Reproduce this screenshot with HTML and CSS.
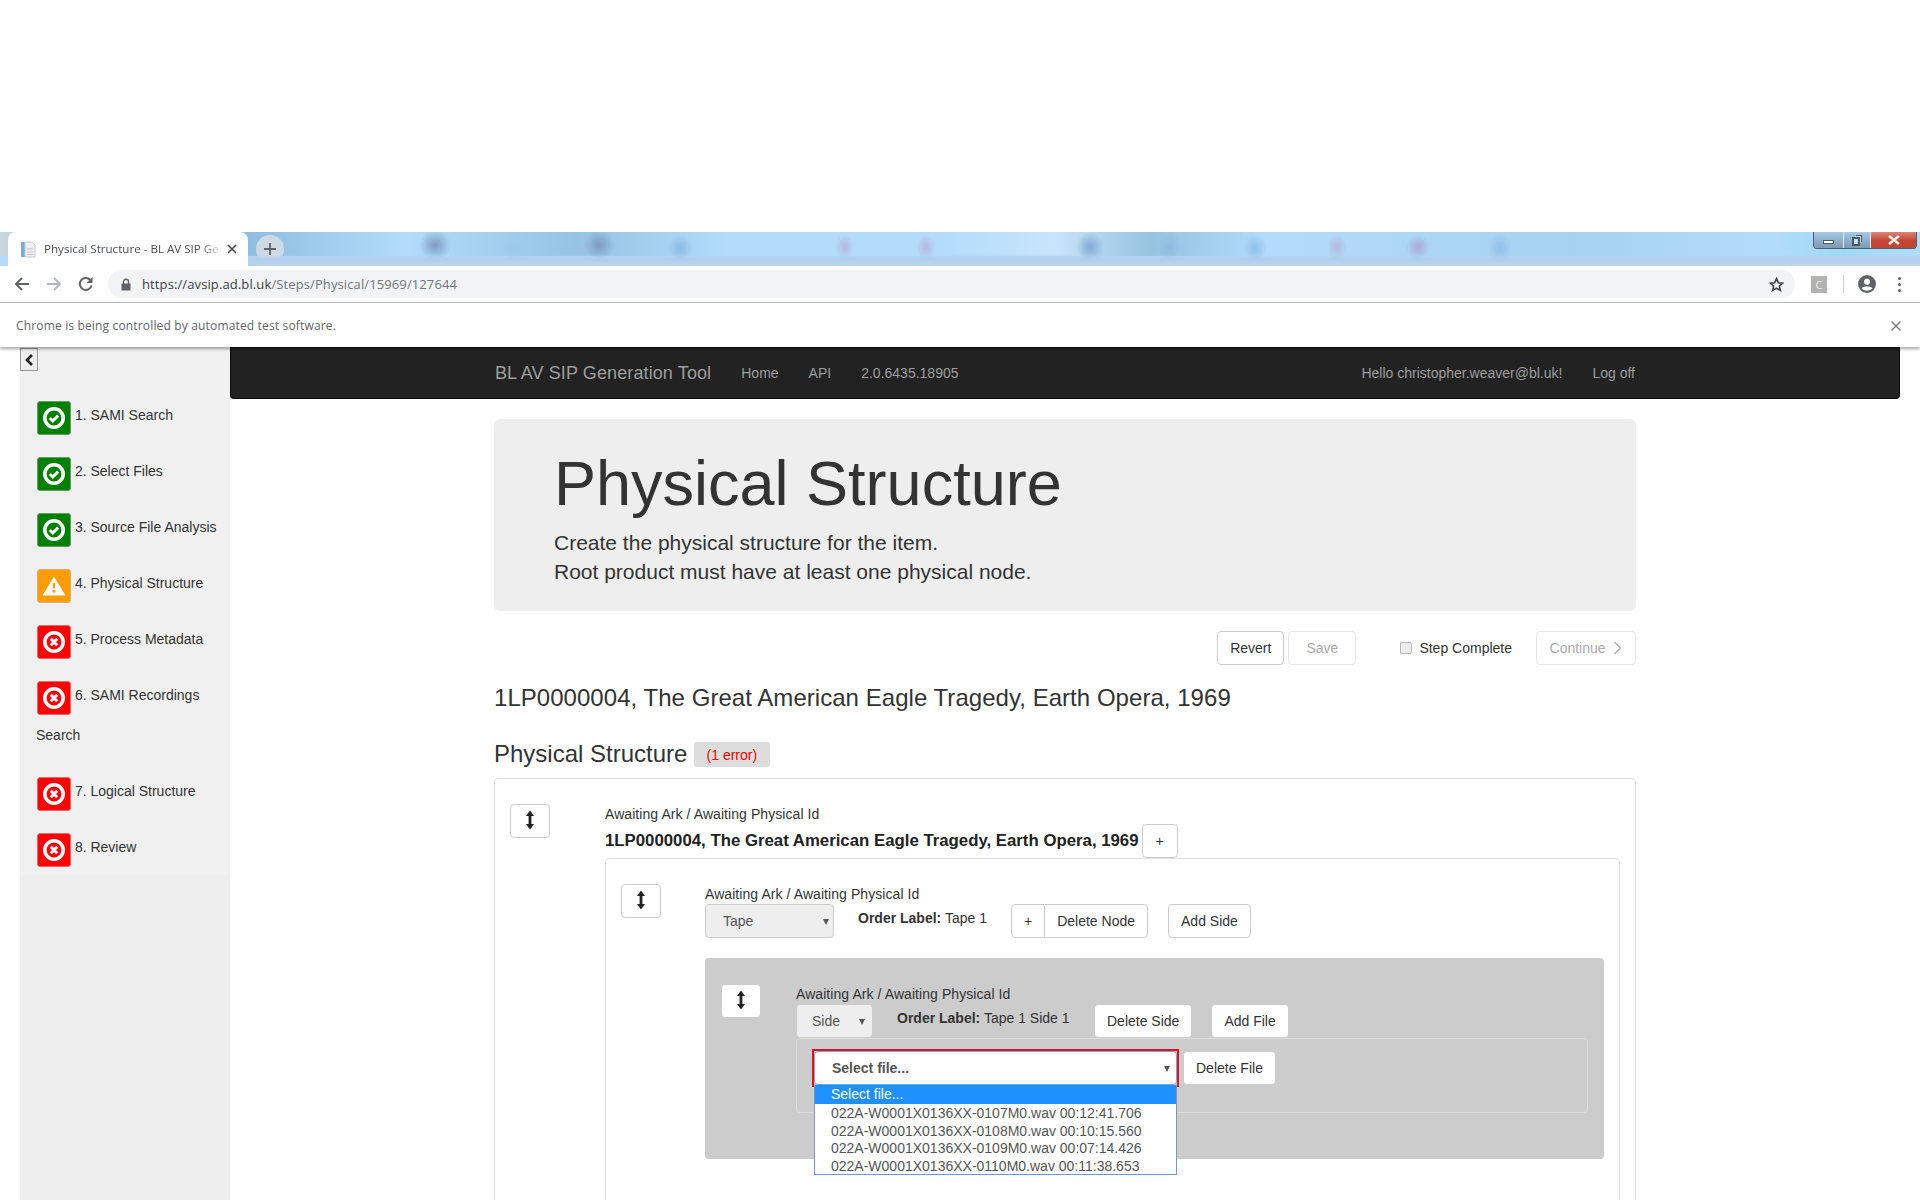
FILE: index.html
```html
<!DOCTYPE html>
<html>
<head>
  <title>Physical Structure - BL AV SIP Generation Tool</title>
  <link rel="stylesheet" href="styles.css">
</head>
<body>
  <svg class="defs" width="0" height="0">
    <symbol id="ok" viewBox="0 0 24 24">
      <circle cx="12" cy="12" r="9.2" fill="none" stroke="#fff" stroke-width="3.6"/>
      <path d="M7.8 12l3 3 5.400-5.400" fill="none" stroke="#fff" stroke-width="3"/>
    </symbol>
    <symbol id="bad" viewBox="0 0 24 24">
      <circle cx="12" cy="12" r="9.2" fill="none" stroke="#fff" stroke-width="3.6"/>
      <path d="M8.8 8.800l6.400 6.400M15.200 8.800l-6.400 6.400" fill="none" stroke="#fff" stroke-width="3"/>
    </symbol>
    <symbol id="warn" viewBox="0 0 24 24">
      <path d="M12 2.500L23.500 21.500H.5zM9 21h6" fill="#fff"/>
      <path d="M10.700 9h2.600l-.4 5.500h-1.800zM10.700 16h2.600v2.500h-2.600z" fill="#ff9c00"/>
    </symbol>
    <symbol id="resize" viewBox="0 0 12 20">
      <path d="M6 .5L10 6H7.400v8H10l-4 5.500L2 14h2.600V6H2z" fill="#222"/>
    </symbol>
  </svg>

  <div class="browser">
    <div class="tabstrip">
      <div class="tab">
        <svg class="favicon" width="16" height="17" viewBox="0 0 16 17">
          <path d="M1 1h4v15H1z" fill="#7ea9d6"/>
          <path d="M5 1h7l3 3v12H5z" fill="#eef0f3" stroke="#c9ccd1"/>
          <path d="M7 8h6M7 11h6M7 13.500h6" stroke="#c3c7cc"/>
        </svg>
        <span class="tab-title">Physical Structure - BL AV SIP Ge</span>
        <svg class="tab-close" width="10" height="10" viewBox="0 0 10 10">
          <path d="M1 1l8 8M9 1L1 9" stroke="#444" stroke-width="1.500"/>
        </svg>
      </div>
      <div class="newtab">
        <svg width="14" height="14" viewBox="0 0 14 14"><path d="M7 1v12M1 7h12" stroke="#5f6368" stroke-width="1.800"/></svg>
      </div>
      <div class="winbtns">
        <div class="winbtn min"><i></i></div>
        <div class="winbtn max"><i></i></div>
        <div class="winbtn close">
          <svg width="14" height="10" viewBox="0 0 14 10"><path d="M2 1l10 8M12 1L2 9" stroke="#eee" stroke-width="2.600"/></svg>
        </div>
      </div>
    </div>
    <div class="toolbar">
      <svg class="nav-icon" width="16" height="16" viewBox="0 0 16 16"><path d="M15 8H2M8 2L2 8l6 6" fill="none" stroke="#5f6368" stroke-width="2"/></svg>
      <svg class="nav-icon" width="16" height="16" viewBox="0 0 16 16"><path d="M1 8h13M8 2l6 6-6 6" fill="none" stroke="#b4b6b9" stroke-width="2"/></svg>
      <svg class="nav-icon" width="16" height="16" viewBox="0 0 16 16"><path d="M13.600 9.500A6 6 0 1 1 12.200 3.800" fill="none" stroke="#5f6368" stroke-width="2"/><path d="M14.500 1v6h-6z" fill="#5f6368"/></svg>
      <div class="omnibox">
        <svg width="10" height="13" viewBox="0 0 10 13"><path d="M2.500 6V3.800a2.500 2.500 0 0 1 5 0V6" fill="none" stroke="#5f6368" stroke-width="1.400"/><path d="M.5 5.500h9v7h-9z" fill="#5f6368"/></svg>
        <span class="url"><b>https://avsip.ad.bl.uk</b>/Steps/Physical/15969/127644</span>
        <svg class="star" width="15" height="15" viewBox="0 0 24 24"><path d="M12 2.500l2.900 6.600 7.100.7-5.400 4.700 1.600 7-6.200-3.700-6.200 3.700 1.600-7L2 9.800l7.100-.7z" fill="none" stroke="#444" stroke-width="2.600"/></svg>
      </div>
      <div class="ext">C</div>
      <div class="tool-sep"></div>
      <svg class="profile" width="18" height="18" viewBox="0 0 18 18"><circle cx="9" cy="9" r="9" fill="#5f6368"/><circle cx="9" cy="6.700" r="3" fill="#fff"/><path d="M3.500 13.200c1.500-2.400 9.500-2.400 11 0a7 7 0 0 1-11 0z" fill="#fff"/></svg>
      <div class="dots"><i></i><i></i><i></i></div>
    </div>
    <div class="infobar">
      <span>Chrome is being controlled by automated test software.</span>
      <svg width="10" height="10" viewBox="0 0 10 10"><path d="M0.500 0.500l9 9M9.500 0.500l-9 9" stroke="#777" stroke-width="1.400"/></svg>
    </div>
  </div>

  <div class="page">
    <aside class="sidebar">
      <button class="collapse">
        <svg width="9" height="12" viewBox="0 0 9 12"><path d="M7 1L2 6l5 5" fill="none" stroke="#222" stroke-width="2.600"/></svg>
      </button>
      <ul class="steps">
        <li><span class="step-icon done"><svg><use href="#ok"/></svg></span> 1. SAMI Search</li>
        <li><span class="step-icon done"><svg><use href="#ok"/></svg></span> 2. Select Files</li>
        <li><span class="step-icon done"><svg><use href="#ok"/></svg></span> 3. Source File Analysis</li>
        <li><span class="step-icon warning"><svg><use href="#warn"/></svg></span> 4. Physical Structure</li>
        <li><span class="step-icon error"><svg><use href="#bad"/></svg></span> 5. Process Metadata</li>
        <li><span class="step-icon error"><svg><use href="#bad"/></svg></span> 6. SAMI Recordings Search</li>
        <li><span class="step-icon error"><svg><use href="#bad"/></svg></span> 7. Logical Structure</li>
        <li><span class="step-icon error"><svg><use href="#bad"/></svg></span> 8. Review</li>
      </ul>
    </aside>

    <main class="main">
      <nav class="navbar">
        <a class="brand">BL AV SIP Generation Tool</a>
        <a>Home</a>
        <a>API</a>
        <a>2.0.6435.18905</a>
        <a class="push">Hello christopher.weaver@bl.uk!</a>
        <a>Log off</a>
      </nav>

      <div class="container">
        <div class="jumbotron">
          <h1>Physical Structure</h1>
          <p>Create the physical structure for the item.<br>Root product must have at least one physical node.</p>
        </div>

        <div class="actions">
          <button class="btn">Revert</button>
          <button class="btn disabled save">Save</button>
          <label class="complete"><span class="checkbox"></span>Step Complete</label>
          <button class="btn disabled continue">Continue
            <svg width="9" height="14" viewBox="0 0 9 14"><path d="M1.500 1l6 6-6 6" fill="none" stroke="#aaa" stroke-width="1.400"/></svg>
          </button>
        </div>

        <h3 class="item-title">1LP0000004, The Great American Eagle Tragedy, Earth Opera, 1969</h3>
        <h3 class="section-title">Physical Structure <span class="badge">(1 error)</span></h3>

        <div class="node root">
          <div class="handle-col"><button class="btn handle"><svg><use href="#resize"/></svg></button></div>
          <div class="node-body">
            <div class="ids">Awaiting Ark / Awaiting Physical Id</div>
            <div class="root-row">
              <strong>1LP0000004, The Great American Eagle Tragedy, Earth Opera, 1969</strong>
              <button class="btn">+</button>
            </div>

            <div class="node tape">
              <div class="handle-col"><button class="btn handle"><svg><use href="#resize"/></svg></button></div>
              <div class="node-body">
                <div class="ids">Awaiting Ark / Awaiting Physical Id</div>
                <div class="row">
                  <div class="select locked tape-select">Tape</div>
                  <div class="order"><b>Order Label:</b> Tape 1</div>
                  <div class="btn-group"><button class="btn">+</button><button class="btn">Delete Node</button></div>
                  <button class="btn add-side">Add Side</button>
                </div>

                <div class="node side">
                  <div class="handle-col"><button class="btn handle"><svg><use href="#resize"/></svg></button></div>
                  <div class="node-body">
                    <div class="ids">Awaiting Ark / Awaiting Physical Id</div>
                    <div class="row">
                      <div class="select locked side-select">Side</div>
                      <div class="order"><b>Order Label:</b> Tape 1 Side 1</div>
                      <button class="btn delete-side">Delete Side</button>
                      <button class="btn add-file">Add File</button>
                    </div>
                    <div class="file-panel">
                      <div class="file-select-wrap">
                        <div class="select file-select">Select file...</div>
                        <ul class="dropdown">
                          <li class="active">Select file...</li>
                          <li>022A-W0001X0136XX-0107M0.wav 00:12:41.706</li>
                          <li>022A-W0001X0136XX-0108M0.wav 00:10:15.560</li>
                          <li>022A-W0001X0136XX-0109M0.wav 00:07:14.426</li>
                          <li>022A-W0001X0136XX-0110M0.wav 00:11:38.653</li>
                        </ul>
                      </div>
                      <button class="btn">Delete File</button>
                    </div>
                  </div>
                </div>
              </div>
            </div>
          </div>
        </div>
      </div>
    </main>
  </div>
</body>
</html>
```

FILE: styles.css
```css
* { box-sizing: border-box; }
html, body { margin: 0; height: 1200px; overflow: hidden; }
body { padding-top: 232px; background: #fff; font-family: "Liberation Sans", Arial, sans-serif; font-size: 14px; line-height: 20px; color: #333; }
.defs { position: absolute; }
ul { list-style: none; margin: 0; padding: 0; }

/* browser chrome */
.browser { font-family: "Open Sans", "Noto Sans", sans-serif; height: 115px; position: relative; z-index: 2; }
.tabstrip {
  height: 34px;
  display: flex;
  align-items: flex-start;
  padding-left: 8px;
  background:
    radial-gradient(ellipse 16px 15px at 435px 13px, #7c9cc2 0, rgba(124, 156, 194, 0) 100%),
    radial-gradient(ellipse 16px 15px at 599px 13px, #7c9cc2 0, rgba(124, 156, 194, 0) 100%),
    radial-gradient(ellipse 12px 14px at 515px 16px, #9cc8ec 0, rgba(156, 200, 236, 0) 100%),
    radial-gradient(ellipse 13px 14px at 680px 16px, #8bbae3 0, rgba(139, 186, 227, 0) 100%),
    radial-gradient(ellipse 10px 13px at 845px 15px, #b6b8e0 0, rgba(182, 184, 224, 0) 100%),
    radial-gradient(ellipse 10px 13px at 926px 15px, #b6b8e0 0, rgba(182, 184, 224, 0) 100%),
    radial-gradient(ellipse 14px 15px at 1090px 15px, #83a9d3 0, rgba(131, 169, 211, 0) 100%),
    radial-gradient(ellipse 12px 15px at 1170px 15px, #90bbdf 0, rgba(144, 187, 223, 0) 100%),
    radial-gradient(ellipse 12px 15px at 1255px 16px, #90c0e8 0, rgba(144, 192, 232, 0) 100%),
    radial-gradient(ellipse 10px 13px at 1337px 15px, #b6b8e0 0, rgba(182, 184, 224, 0) 100%),
    radial-gradient(ellipse 12px 13px at 1418px 15px, #a8abd8 0, rgba(168, 171, 216, 0) 100%),
    radial-gradient(ellipse 12px 15px at 1500px 16px, #90c0e8 0, rgba(144, 192, 232, 0) 100%),
    linear-gradient(90deg, #c9d8dc 0, #a9d2f2 3%, #8fbde0 13%, #b3dcfb 21%, #96c3e4 30%, #b3dcfb 38%, #b3dcfb 49%, #c8e4fb 55%, #95c3e0 60%, #b3dcfb 66%, #a6d1ef 82%, #b3dcfb 92%, #9fdaf5 96%, #b3dcfb 100%),
    #b2dbfb;
  background-size: auto, auto, auto, auto, auto, auto, auto, auto, auto, auto, auto, auto, 100% 24px, auto;
  background-repeat: no-repeat;
  position: relative;
}
.tabstrip::after { content: ""; position: absolute; left: 248px; right: 0; bottom: 0; height: 11px; background: linear-gradient(rgba(170, 203, 232, 0), #b0cdea 40%, #bcd6f0); }
.tab { width: 240px; height: 34px; flex: none; background: #fff; border-radius: 8px 8px 0 0; display: flex; align-items: center; padding-left: 12px; }
.favicon { flex: none; margin-top: 1px; }
.tab-title { width: 176px; flex: none; margin-left: 8px; white-space: nowrap; font-size: 11.6px; color: #4a4d51; -webkit-mask-image: linear-gradient(90deg, #000 88%, rgba(0, 0, 0, .2)); mask-image: linear-gradient(90deg, #000 88%, rgba(0, 0, 0, .2)); }
.tab-close { margin-left: 7px; flex: none; }
.newtab { width: 28px; height: 28px; flex: none; margin: 3px 0 0 8px; background: #cfd9e4; border-radius: 50%; display: flex; align-items: center; justify-content: center; }
.winbtns { margin-left: auto; margin-right: 3px; width: 104px; height: 17px; display: flex; border: 1px solid #4c5e70; border-top: 0; border-radius: 0 0 4px 4px; overflow: hidden; position: relative; z-index: 1; }
.winbtn { display: flex; align-items: center; justify-content: center; border-right: 1px solid #dfe8f0; background: linear-gradient(#a3cbe6, #8fb0c8 50%, #7d9cb2); }
.winbtn.min { width: 30px; }
.winbtn.min i { width: 11px; height: 4px; margin-top: 3px; border: 1px solid #46586a; background: #fff; }
.winbtn.max { width: 27px; }
.winbtn.max i { width: 8px; height: 9px; margin: 2px 2px 0 0; border: 2px solid #46586a; background: #cfe0ec; box-shadow: 2px -2px 0 -1px #cfe0ec, 3px -3px 0 -1px #46586a; }
.winbtn.close { flex: 1; border: 0; background: linear-gradient(#d8867a, #c9432f 55%, #b9493c); }

.toolbar { height: 37px; background: #fff; border-bottom: 1px solid #b9b9b9; display: flex; align-items: center; padding: 0 0 0 14px; }
.nav-icon { margin-right: 16px; flex: none; }
.omnibox { width: 1687px; height: 28px; margin-left: -2px; padding: 0 11px 0 13px; background: #f1f3f4; border-radius: 14px; display: flex; align-items: center; }
.url { margin-left: 11px; font-size: 13px; letter-spacing: .11px; color: #70757a; }
.url b { font-weight: 400; color: #3c4043; }
.star { margin-left: auto; }
.ext { width: 16px; height: 17px; margin-left: 16px; background: #b3b3b3; color: #e8e8e8; font-size: 11px; line-height: 17px; text-align: center; }
.tool-sep { width: 1px; height: 18px; margin-left: 16px; background: #cfcfcf; }
.profile { margin-left: 14px; flex: none; }
.dots { margin-left: 22px; display: flex; flex-direction: column; gap: 3px; }
.dots i { width: 3px; height: 3px; background: #5f6368; border-radius: 50%; }
.infobar { height: 44px; padding: 1px 19px 0 16px; background: #fff; display: flex; align-items: center; justify-content: space-between; font-size: 12px; letter-spacing: .16px; color: #5f6368; box-shadow: 0 2px 3px rgba(0, 0, 0, .35); }

/* page */
.page { display: flex; height: 853px; padding-left: 20px; padding-right: 20px; }
.sidebar { width: 210px; height: 853px; flex: none; background: linear-gradient(#f0f0f0 528px, #eee 528px); position: relative; padding: 48px 0 0 16px; }
.collapse { position: absolute; left: 0; top: 1px; width: 18px; height: 23px; padding: 0; background: #efefef; border: 1px solid #999; display: flex; align-items: center; justify-content: center; }
.steps li { line-height: 40px; margin-bottom: 16px; color: #333; font-size: 14px; }
.step-icon { display: inline-block; width: 34px; height: 34px; margin: 6px 0 0 1px; vertical-align: top; border-radius: 3px; border: 1px solid #ccc; text-align: center; }
.step-icon svg { width: 24px; height: 24px; margin-top: 4px; }
.done { background: #008000; border-color: #5f9f5f; }
.warning { background: #ff9c00; border-color: #ddb26c; }
.error { background: #f00; border-color: #e66; }

.main { flex: 1; min-width: 0; }
.navbar { height: 52px; background: #222; border: 1px solid #080808; border-top-color: #111; border-radius: 0 0 4px 4px; padding: 0 264px 0 264px; display: flex; align-items: center; gap: 30px; color: #9d9d9d; }
.brand { font-size: 18px; letter-spacing: .11px; }
.container { width: 1142px; margin-left: 264px; }
.push { margin-left: auto; }
.jumbotron { margin-top: 20px; height: 192px; padding: 30px 60px; background: #eee; border-radius: 6px; }
.jumbotron h1 { margin: 0 0 10px; font-size: 63px; line-height: 69px; font-weight: 500; }
.jumbotron p { margin: 0; font-size: 21px; line-height: 29px; font-weight: 300; }

.btn { display: inline-block; height: 34px; padding: 0 12px; background: #fff; border: 1px solid #ccc; border-radius: 4px; color: #333; font: inherit; line-height: 32px; white-space: nowrap; }
.disabled { border-color: #e6e6e6; color: #aaa; }
.actions { margin-top: 20px; display: flex; justify-content: flex-end; align-items: center; }
.save { margin-left: 4px; width: 68px; }
.complete { margin: 0 24px 0 44px; display: flex; align-items: center; }
.checkbox { width: 12px; height: 12px; margin-right: 7px; background: #ededed; border: 1px solid #b5b5b5; border-radius: 2px; }
.continue { width: 100px; }
.actions svg { margin-left: 4px; vertical-align: -2px; }
h3 { margin: 0; font-size: 24px; line-height: 26px; font-weight: 500; }
.item-title { margin-top: 20px; letter-spacing: .04px; }
.section-title { margin-top: 30px; height: 37px; }
.badge { display: inline-block; height: 25px; padding: 0 12.5px; background: #ddd; border-radius: 3px; color: #f00; font-size: 14px; font-weight: 400; line-height: 27px; vertical-align: 2px; }

/* tree of nodes */
.node { display: flex; border-radius: 4px; }
.handle { width: 40px; padding: 0; display: flex; align-items: center; justify-content: center; }
.handle svg { width: 12px; height: 20px; margin-top: -3px; }
.node-body { flex: 1; min-width: 0; }
.root { height: 700px; padding: 25px 15px 0 15px; border: 1px solid #ddd; }
.root > .handle-col { width: 95px; flex: none; }
.root-row { height: 34px; display: flex; align-items: center; gap: 3px; }
.root-row strong { font-size: 16.8px; color: #222; }
.root-row .btn { width: 36px; padding: 0; }
.ids { height: 20px; line-height: 20px; letter-spacing: .07px; }
.tape { height: 600px; padding: 25px 15px 0 15px; border: 1px solid #ddd; }
.tape > .handle-col { width: 84px; flex: none; }
.row { display: flex; align-items: flex-start; }
.select { position: relative; height: 34px; padding: 0 12px; border: 1px solid #ccc; border-radius: 4px; line-height: 32px; color: #555; }
.select::after { content: ""; position: absolute; right: 4px; top: 14px; border: 3.5px solid transparent; border-top: 6px solid #555; border-bottom: 0; }
.locked { background: #eee; }
.tape-select { width: 129px; padding-left: 17px; }
.order { line-height: 20px; padding-top: 4px; }
.tape .row .order { margin-left: 24px; width: 153px; }
.btn-group { display: flex; }
.btn-group .btn:first-child { border-radius: 4px 0 0 4px; }
.btn-group .btn:last-child { margin-left: -1px; border-radius: 0 4px 4px 0; }
.add-side { margin-left: 20px; }
.side { margin-top: 20px; height: 201px; padding: 26px 16px 0 16px; background: #ccc; }
.side > .handle-col { width: 75px; flex: none; }
.side .btn { border-color: #ccc; }
.side-select { width: 77px; padding-left: 15px; }
.side-select::after { right: 7px; }
.side .row .order { margin-left: 24px; width: 197px; }
.add-file { margin-left: 19px; }
.file-panel { height: 75px; padding: 12px 17px; border: 1px solid #ddd; border-radius: 4px; display: flex; align-items: flex-start; gap: 6px; }
.file-select-wrap { position: relative; height: 34px; outline: 2px solid #e2101f; }
.file-select { width: 363px; background: #fff; padding-left: 17px; font-weight: 700; border-color: #66afe9; }
.file-select::after { right: 6px; }
.dropdown { position: absolute; left: 0; top: 34px; width: 363px; height: 90px; background: #fff; border: 1px solid #7b94cf; border-top: 0; z-index: 3; }
.dropdown li { height: 17.7px; line-height: 18px; padding-left: 16px; color: #555; white-space: nowrap; }
.dropdown .active { height: 19px; line-height: 19px; background: #1e90ff; color: #fff; }
```
